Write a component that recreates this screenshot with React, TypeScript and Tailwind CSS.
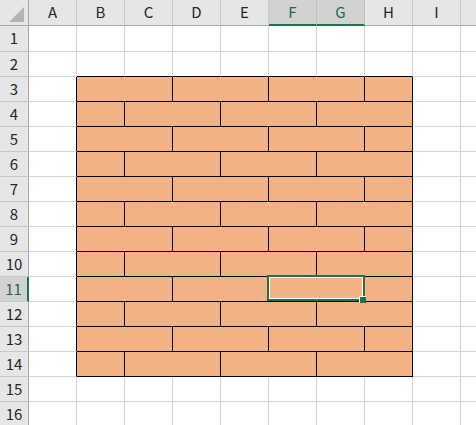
import { Fragment } from "react";

const COLUMNS = ["A", "B", "C", "D", "E", "F", "G", "H", "I"];
const ROWS = Array.from({ length: 16 }, (_, i) => i + 1);

// brick layout for rows 3..14: odd rows start with a double-wide brick
const ODD_BRICKS = [
  { key: "BC", span: 2 },
  { key: "DE", span: 2 },
  { key: "FG", span: 2 },
  { key: "H", span: 1 },
];
const EVEN_BRICKS = [
  { key: "B", span: 1 },
  { key: "CD", span: 2 },
  { key: "EF", span: 2 },
  { key: "GH", span: 2 },
];

const SELECTED_ROW = 11;

function ColumnHeader({ label }: { label: string }) {
  const selected = label === "F" || label === "G";
  return (
    <div
      className={`flex items-center justify-center border-r ${
        selected
          ? "border-r-[#c0c0c0] border-b-2 border-b-[#217346] bg-[#d2d2d2] text-[#1d6b40]"
          : "border-r-[#c8c8c8] border-b border-b-[#a8a8a8] bg-[#e6e6e6] text-[#262626]"
      }`}
    >
      {label}
    </div>
  );
}

function RowHeader({ n }: { n: number }) {
  const selected = n === SELECTED_ROW;
  return (
    <div
      className={`flex items-center justify-center border-b border-b-[#c8c8c8] ${
        selected
          ? "border-r-2 border-r-[#217346] bg-[#d2d2d2] text-[#1d6b40]"
          : "border-r border-r-[#a8a8a8] bg-[#e6e6e6] text-[#262626]"
      }`}
    >
      {n}
    </div>
  );
}

function Cell({ bottom = false, left = false }: { bottom?: boolean; left?: boolean }) {
  return (
    <div
      className={`border-r border-b ${left ? "border-r-black" : "border-r-[#d4d4d4]"} ${
        bottom ? "border-b-black" : "border-b-[#d4d4d4]"
      }`}
    />
  );
}

function Selection() {
  return (
    <div className="absolute -left-[2px] -top-[2px] -right-[1px] bottom-0 z-10 border-2 border-[#217346]">
      <div className="h-full w-full border border-white" />
      <div className="absolute -right-[3px] -bottom-[4px] h-[7px] w-[7px] border-l border-t border-white bg-[#217346]" />
    </div>
  );
}

function BrickRow({ n }: { n: number }) {
  const bricks = n % 2 === 1 ? ODD_BRICKS : EVEN_BRICKS;
  return (
    <>
      <Cell left />
      {bricks.map((b) => (
        <div
          key={b.key}
          className={`relative border-r border-b border-black bg-[#f4b183] ${
            b.span === 2 ? "col-span-2" : ""
          }`}
        >
          {n === SELECTED_ROW && b.key === "FG" && <Selection />}
        </div>
      ))}
      <Cell />
      <div className="border-b border-b-[#d4d4d4]" />
    </>
  );
}

function PlainRow({ n }: { n: number }) {
  return (
    <>
      {COLUMNS.map((c) => (
        <Cell key={c} bottom={n === 2 && c >= "B" && c <= "H"} />
      ))}
      <div className="border-b border-b-[#d4d4d4]" />
    </>
  );
}

export default function App() {
  return (
    <div
      className="h-[425px] w-[476px] overflow-hidden bg-white text-[15px]"
      style={{ fontFamily: '"Noto Sans CJK JP", "Noto Sans", sans-serif' }}
    >
      <div className="grid grid-cols-[29px_repeat(9,48px)_1fr] grid-rows-[26px_26px_repeat(15,25px)]">
        {/* corner */}
        <div className="flex items-start justify-start border-r border-b border-[#a8a8a8] bg-[#e6e6e6]">
          <svg width="28" height="25" viewBox="0 0 28 25">
            <polygon points="24,7 24,22 9,22" fill="#b4b4b4" />
          </svg>
        </div>
        {COLUMNS.map((c) => (
          <ColumnHeader key={c} label={c} />
        ))}
        <div className="border-b border-b-[#a8a8a8] bg-[#e6e6e6]" />

        {ROWS.map((n) => (
          <Fragment key={n}>
            <RowHeader n={n} />
            {n >= 3 && n <= 14 ? <BrickRow n={n} /> : <PlainRow n={n} />}
          </Fragment>
        ))}
      </div>
    </div>
  );
}
